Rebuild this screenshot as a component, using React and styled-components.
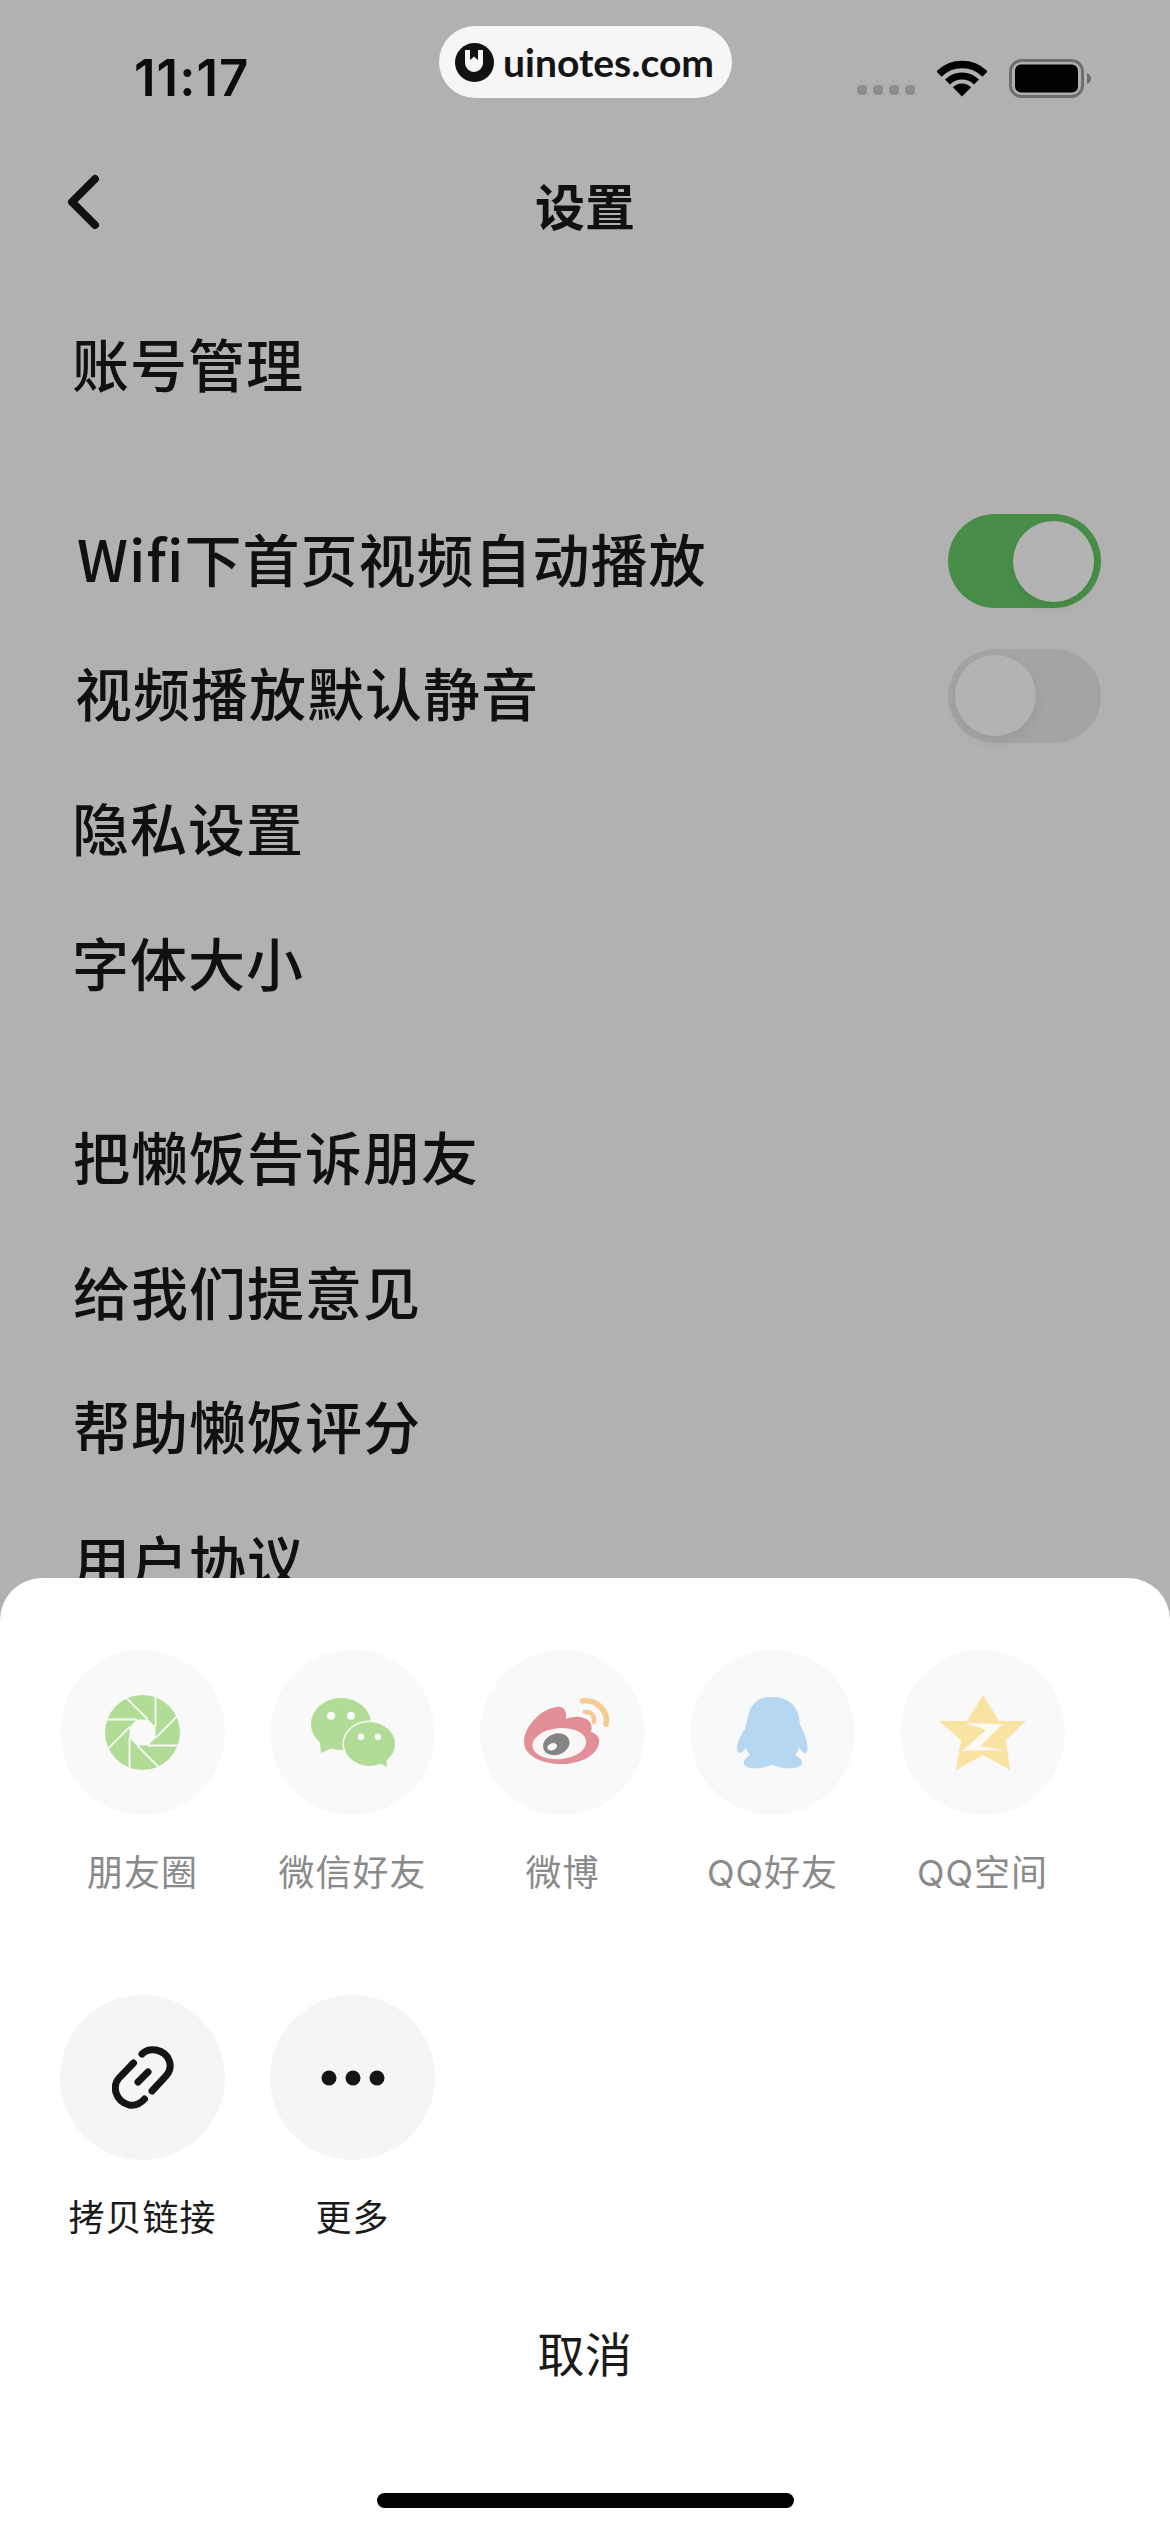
import React from "react";
import styled, { createGlobalStyle } from "styled-components";

const Global = createGlobalStyle`
  html, body { margin: 0; padding: 0; background: #b1b1b1; }
  * { box-sizing: border-box; }
`;

const CJK = `"Noto Sans CJK SC", "Noto Sans", sans-serif`;

const Page = styled.div`
  position: relative;
  width: 1170px;
  height: 2532px;
  overflow: hidden;
  background: #b1b1b1;
  color: #111;
  font-family: "Inter", ${CJK};
`;

const StatusBar = styled.div`
  height: 156px;
  padding: 0 79px 0 134px;
  display: flex;
  align-items: center;
  justify-content: space-between;
`;

const Time = styled.span`
  font-family: "Inter", sans-serif;
  font-weight: 600;
  font-size: 51px;
  letter-spacing: 1px;
  line-height: 56px;
  color: #0c0c0c;
`;

const StatusIcons = styled.div`
  display: flex;
  align-items: center;
  gap: 22px;
`;

const SignalDots = styled.div`
  display: flex;
  gap: 6px;
  padding-top: 24px;
`;

const SignalDot = styled.i`
  width: 10px;
  height: 10px;
  border-radius: 4px;
  background: #8e8e8e;
`;

const Badge = styled.div`
  position: absolute;
  left: 439px;
  top: 26px;
  width: 293px;
  height: 72px;
  border-radius: 36px;
  background: #f6f6f6;
  display: flex;
  align-items: center;
  padding-left: 16px;
  gap: 9px;
`;

const BadgeText = styled.span`
  font-family: "Lato", sans-serif;
  font-weight: 700;
  font-size: 39px;
  color: #141414;
  line-height: 1;
`;

const Nav = styled.div`
  height: 102px;
  padding: 0 0 10px 66px;
  position: relative;
  display: flex;
  align-items: center;
`;

const NavTitle = styled.div`
  position: absolute;
  left: 0;
  right: 0;
  top: 18px;
  text-align: center;
  font-family: ${CJK};
  font-weight: 700;
  font-size: 50px;
  line-height: 60px;
`;

const List = styled.div`
  margin-top: 37px;
  display: flex;
  flex-direction: column;
  gap: 60px;
`;

const Group = styled.div`
  display: flex;
  flex-direction: column;
`;

const Row = styled.div`
  height: 134.6px;
  padding: 0 69px 0 ${(p) => p.$indent}px;
  display: flex;
  align-items: center;
  justify-content: space-between;
`;

const RowLabel = styled.span`
  font-family: ${CJK};
  font-weight: 500;
  font-size: 57px;
  letter-spacing: 1px;
  line-height: 70px;
  color: #101010;
  white-space: pre;
`;

const Toggle = styled.div`
  width: 153px;
  height: 94px;
  margin-top: 9px;
  border-radius: 47px;
  padding: 0 7px;
  display: flex;
  align-items: center;
  justify-content: ${(p) => (p.$on ? "flex-end" : "flex-start")};
  background: ${(p) => (p.$on ? "#488e48" : "#a4a4a4")};
`;

const Knob = styled.div`
  width: 81px;
  height: 81px;
  border-radius: 50%;
  background: #b2b3b2;
  box-shadow: 0 6px 14px rgba(0, 0, 0, 0.06);
`;

const Sheet = styled.div`
  position: absolute;
  left: 0;
  right: 0;
  top: 1578px;
  bottom: 0;
  background: #fff;
  border-radius: 42px 42px 0 0;
  padding-top: 72px;
  display: flex;
  flex-direction: column;
  align-items: center;
`;

const ShareGrid = styled.div`
  align-self: stretch;
  padding-left: 60px;
  display: grid;
  grid-template-columns: repeat(5, 165px);
  column-gap: 45px;
  row-gap: 97px;
`;

const ShareItem = styled.div`
  display: flex;
  flex-direction: column;
  align-items: center;
  gap: 33px;
`;

const ShareCircle = styled.div`
  width: 165px;
  height: 165px;
  border-radius: 50%;
  background: ${(p) => (p.$muted ? "#f9f9f9" : "#f5f5f5")};
  display: flex;
  align-items: center;
  justify-content: center;
`;

const ShareLabel = styled.span`
  font-family: "Inter", ${CJK};
  font-size: 36px;
  line-height: 50px;
  white-space: nowrap;
  color: ${(p) => (p.$muted ? "#8a8a8a" : "#1a1a1a")};
  letter-spacing: 1px;
`;

const Cancel = styled.div`
  margin-top: 79px;
  font-family: ${CJK};
  font-size: 47px;
  line-height: 60px;
  letter-spacing: 0.5px;
  color: #1a1a1a;
`;

const HomeBar = styled.div`
  margin-top: 111px;
  width: 417px;
  height: 15px;
  border-radius: 8px;
  background: #000;
`;

const Back = () => (
  <svg width="40" height="60" viewBox="0 0 40 60">
    <path d="M29 7 L6 30 L29 53" fill="none" stroke="#111" strokeWidth="8" strokeLinecap="round" strokeLinejoin="round" />
  </svg>
);

const Wifi = () => (
  <svg width="50" height="38" viewBox="0 0 50 37">
    <path d="M2 14.5 A32.5 32.5 0 0 1 48 14.5" fill="none" stroke="#000" strokeWidth="7.5" />
    <path d="M10.5 22.5 A20.5 20.5 0 0 1 39.5 22.5" fill="none" stroke="#000" strokeWidth="7" />
    <path d="M25 37 L15.8 27.8 A13 13 0 0 1 34.2 27.8 Z" fill="#000" />
  </svg>
);

const Battery = () => (
  <svg width="82" height="39" viewBox="0 0 82 39">
    <rect x="1.5" y="1.5" width="72" height="36" rx="11" fill="none" stroke="#6e6e6e" strokeWidth="3" />
    <rect x="6" y="5.5" width="63" height="28" rx="6" fill="#000" />
    <path d="M78 14 C81 15 82 17 82 19.5 C82 22 81 24 78 25 Z" fill="#6e6e6e" />
  </svg>
);

const Logo = () => (
  <svg width="39" height="39" viewBox="0 0 39 39">
    <circle cx="19.5" cy="19.5" r="19.5" fill="#111" />
    <path d="M10 7 H15 V17 L19 13.5 L23 17 V7 H28 V20 A9 9 0 0 1 10 20 Z" fill="#f6f6f6" />
  </svg>
);

const Moments = () => (
  <svg width="75" height="75" viewBox="0 0 75 75">
    <circle cx="37.5" cy="37.5" r="37.5" fill="#b1dc96" />
    <polygon points="50.5,32 50.5,43 42.9,50.5 32,50.5 24.5,43 24.5,32 32,24.5 42.9,24.5" fill="#f9f9f9" />
    {[0, 1, 2, 3, 4, 5, 6, 7].map((i) => (
      <line key={i} x1="50.5" y1="-1" x2="50.5" y2="32" stroke="#f9f9f9" strokeWidth="1.8" transform={`rotate(${i * 45} 37.5 37.5)`} />
    ))}
  </svg>
);

const WeChat = () => (
  <svg width="84" height="70" viewBox="0 0 84 70">
    <path d="M9 44 L10 55 L21 50 Z" fill="#b1dc96" />
    <ellipse cx="30" cy="26" rx="30" ry="26" fill="#b1dc96" />
    <circle cx="20" cy="17.7" r="4" fill="#f9f9f9" />
    <circle cx="40" cy="17.7" r="4" fill="#f9f9f9" />
    <ellipse cx="58.5" cy="46" rx="25.5" ry="22" fill="#b1dc96" stroke="#f9f9f9" strokeWidth="3" paintOrder="stroke" />
    <path d="M66 64 L76 69 L75 58 Z" fill="#b1dc96" />
    <circle cx="50" cy="38.7" r="3.3" fill="#f9f9f9" />
    <circle cx="67" cy="38.7" r="3.3" fill="#f9f9f9" />
  </svg>
);

const WeiboIcon = styled.svg`
  margin: 1px 0 0 12px;
`;

const Weibo = () => (
  <WeiboIcon width="90" height="75" viewBox="0 0 90 75">
    <path d="M0 46 C0 30 18 12 33 11 C40 10 43 15 42 23 C48 20 60 19 66 26 C68 30 68 33 67 36 C73 38 76 42 75 47 C73 60 55 68 38 68 C18 68 0 60 0 46Z" fill="#e38f98" />
    <ellipse cx="35.3" cy="47.7" rx="27" ry="15.5" fill="#fbf7f7" transform="rotate(-5 35.3 47.7)" />
    <ellipse cx="32.3" cy="48.3" rx="13.5" ry="10.5" fill="#848484" transform="rotate(-20 32.3 48.3)" />
    <ellipse cx="28.3" cy="50.7" rx="5" ry="3.5" fill="#f9f9f9" transform="rotate(-20 28.3 50.7)" />
    <path d="M58.5 5 C72 3 85 15 82 28" fill="none" stroke="#f5cb95" strokeWidth="5.6" strokeLinecap="round" />
    <path d="M61 16 C67 15.5 71 20 70 26" fill="none" stroke="#f5cb95" strokeWidth="4.5" strokeLinecap="round" />
  </WeiboIcon>
);

const QQ = () => (
  <svg width="71" height="72" viewBox="0 0 71 72">
    <path
      d="M35 0 C50 0 59 7 62 20 L63 27 L65 32 C68 37 71 46 70.5 53 C70 57 67 57 65 54 L62 51 C61 54 60 56 58 58 C62 60 66 63 65 67 C63 71 52 73 42 70 L35 68 L28 70 C18 73 8 71 7 67 C6 63 10 60 13 58 C11 56 10 54 9 51 L5 55 C3 57 0 56 0 52 C0 46 4 37 8 32 L9 27 L11 20 C14 7 20 0 35 0 Z"
      fill="#b6d7f2"
    />
  </svg>
);

const Star = () => (
  <svg width="87" height="75" viewBox="0 0 87 75">
    <path d="M44 0 L60 26 L87 26 L67 45 L71 75 L44 60 L17 75 L22 45 L0 26 L28 26 Z" fill="#f8e3a3" />
    <path d="M27 28 L64 29 L41 51 L64 55 L23 56 L47 35 Z" fill="#fbfaf3" />
  </svg>
);

const LinkIcon = () => (
  <svg width="62" height="63" viewBox="0 0 62 63">
    <g fill="none" stroke="#151515" strokeWidth="7" strokeLinecap="round">
      <path d="M40 45 L54 30 C62 21 58 7 44 4 C38 3 34 4 30 8" />
      <path d="M21.5 17 L7 32 C0 40 3 55 17 59 C23 60 28 58 32.5 53" />
      <path d="M26 36 L36 26" />
    </g>
  </svg>
);

const More = () => (
  <svg width="64" height="16" viewBox="0 0 64 16" fill="#151515">
    <circle cx="8" cy="8" r="7.5" />
    <circle cx="32" cy="8" r="7.5" />
    <circle cx="56" cy="8" r="7.5" />
  </svg>
);

const groups = [
  [{ text: "账号管理", indent: 72 }],
  [
    { text: "Wifi下首页视频自动播放", toggle: "on", indent: 77 },
    { text: "视频播放默认静音", toggle: "off", indent: 75 },
    { text: "隐私设置", indent: 72 },
    { text: "字体大小", indent: 72 },
  ],
  [
    { text: "把懒饭告诉朋友", indent: 73 },
    { text: "给我们提意见", indent: 73 },
    { text: "帮助懒饭评分", indent: 73 },
    { text: "用户协议", indent: 73 },
  ],
];

const shares = [
  { label: "朋友圈", icon: <Moments />, muted: true },
  { label: "微信好友", icon: <WeChat />, muted: true },
  { label: "微博", icon: <Weibo />, muted: true },
  { label: "QQ好友", icon: <QQ />, muted: true },
  { label: "QQ空间", icon: <Star />, muted: true },
  { label: "拷贝链接", icon: <LinkIcon /> },
  { label: "更多", icon: <More /> },
];

export default function App() {
  return (
    <Page>
      <Global />
      <StatusBar>
        <Time>11:17</Time>
        <StatusIcons>
          <SignalDots>
            {[0, 1, 2, 3].map((i) => (
              <SignalDot key={i} />
            ))}
          </SignalDots>
          <Wifi />
          <Battery />
        </StatusIcons>
      </StatusBar>
      <Badge>
        <Logo />
        <BadgeText>uinotes.com</BadgeText>
      </Badge>
      <Nav>
        <Back />
        <NavTitle>设置</NavTitle>
      </Nav>
      <List>
        {groups.map((rows, g) => (
          <Group key={g}>
            {rows.map((r) => (
              <Row key={r.text} $indent={r.indent}>
                <RowLabel>{r.text}</RowLabel>
                {r.toggle && (
                  <Toggle $on={r.toggle === "on"}>
                    <Knob />
                  </Toggle>
                )}
              </Row>
            ))}
          </Group>
        ))}
      </List>
      <Sheet>
        <ShareGrid>
          {shares.map((s) => (
            <ShareItem key={s.label}>
              <ShareCircle $muted={s.muted}>{s.icon}</ShareCircle>
              <ShareLabel $muted={s.muted}>{s.label}</ShareLabel>
            </ShareItem>
          ))}
        </ShareGrid>
        <Cancel>取消</Cancel>
        <HomeBar />
      </Sheet>
    </Page>
  );
}
